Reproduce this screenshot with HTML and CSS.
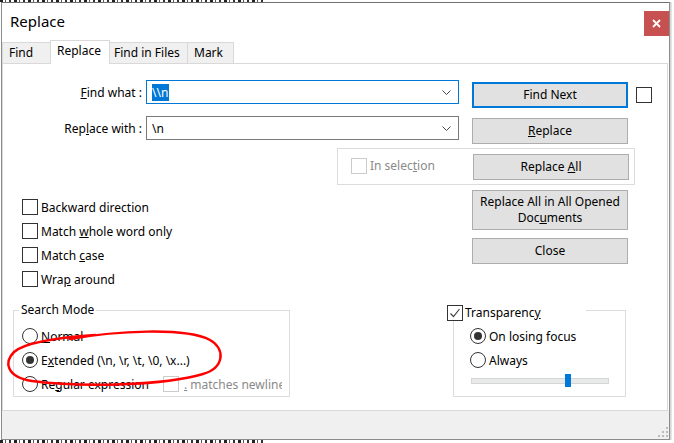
FILE: index.html
```html
<!DOCTYPE html>
<html>
<head>
<meta charset="utf-8">
<title>Replace</title>
<link rel="stylesheet" href="styles.css">
</head>
<body>
<div class="bgtop"></div>
<div class="screen">
  <div class="dialog">
    <div class="titlebar">
      <span class="title">Replace</span>
      <span class="close"><svg width="9" height="9" viewBox="0 0 9 9"><path d="M1 1L8 8M8 1L1 8" stroke="#fff" stroke-width="1.8" fill="none"/></svg></span>
    </div>
    <div class="tabs">
      <div class="tab t1">Find</div>
      <div class="tab t2 active">Replace</div>
      <div class="tab t3">Find in Files</div>
      <div class="tab t4">Mark</div>
    </div>
    <div class="panel">
      <div class="row r1">
        <div class="lbl"><u>F</u>ind what :</div>
        <div class="combo focus"><span class="sel">\\n</span><svg class="chev" width="9" height="5" viewBox="0 0 9 5"><path d="M0.5 0.5L4.5 4.5L8.5 0.5" stroke="#444" fill="none"/></svg></div>
        <div class="btn def"><span>Find Next</span></div>
        <span class="chk side"></span>
      </div>
      <div class="row r2">
        <div class="lbl">Rep<u>l</u>ace with :</div>
        <div class="combo"><span class="val">\n</span><svg class="chev" width="9" height="5" viewBox="0 0 9 5"><path d="M0.5 0.5L4.5 4.5L8.5 0.5" stroke="#444" fill="none"/></svg></div>
        <div class="btn rbtn"><span><u>R</u>eplace</span></div>
      </div>
      <div class="selframe">
        <span class="chk dis"></span><span class="distext">In selec<u>t</u>ion</span>
        <div class="btn rall"><span>Replace <u>A</u>ll</span></div>
      </div>
      <div class="mid">
        <div class="opts">
          <div class="opt"><span class="chk"></span><span>Backward direction</span></div>
          <div class="opt"><span class="chk"></span><span>Match <u>w</u>hole word only</span></div>
          <div class="opt"><span class="chk"></span><span>Match <u>c</u>ase</span></div>
          <div class="opt"><span class="chk"></span><span>Wra<u>p</u> around</span></div>
        </div>
        <div class="btncol">
          <div class="btn tall"><span>Replace All in All Opened<br>Doc<u>u</u>ments</span></div>
          <div class="btn"><span>Close</span></div>
        </div>
      </div>
      <div class="bottom">
        <fieldset class="mode">
          <legend>Search Mode</legend>
          <div class="opt"><span class="rad"></span><span><u>N</u>ormal</span></div>
          <div class="opt"><span class="rad on"></span><span>E<u>x</u>tended (\n, \r, \t, \0, \x...)</span></div>
          <div class="opt"><span class="rad"></span><span>Re<u>g</u>ular expression</span>
            <span class="nl"><span class="chk dis"></span><span class="distext"><u>.</u> matches newline</span></span>
          </div>
        </fieldset>
        <fieldset class="trans">
          <legend><span class="chk checked"><svg width="14" height="14" viewBox="0 0 14 14"><path d="M2.5 7.5L5.5 10.5L11.5 3" stroke="#444" stroke-width="1.2" fill="none"/></svg></span><span class="ttext">Transparenc<u>y</u></span></legend>
          <div class="opt"><span class="rad on"></span><span>On losing focus</span></div>
          <div class="opt"><span class="rad"></span><span>Always</span></div>
          <div class="slider"><div class="track"></div><div class="thumb" style="margin-left:94px"></div></div>
        </fieldset>
      </div>
    </div>
    <div class="footer">
      <svg class="grip" width="10" height="10" viewBox="0 0 10 10" fill="#bcbcbc"><rect x="8" y="0" width="2" height="2"/><rect x="4" y="4" width="2" height="2"/><rect x="8" y="4" width="2" height="2"/><rect x="0" y="8" width="2" height="2"/><rect x="4" y="8" width="2" height="2"/><rect x="8" y="8" width="2" height="2"/></svg>
    </div>
  </div>
  <div class="shadow"></div>
</div>
<div class="bgbot"></div>
<svg class="annot" width="674" height="443" viewBox="0 0 674 443"><path d="M70 339 C115 331 185 327 210 340 C226 349 224 368 203 374 C165 385 85 388 32 381 C6 377 4 362 14 352 C24 343 52 338 95 335" stroke="#f00" stroke-width="2.5" fill="none" stroke-linecap="round"/></svg>
</body>
</html>
```
FILE: styles.css
```css
* { box-sizing: border-box; }
html, body { margin: 0; padding: 0; }
body {
  width: 674px; height: 443px; overflow: hidden; position: relative;
  background: #fff;
  font-family: "Noto Sans", "Open Sans", sans-serif;
  font-size: 12px; color: #000;
}
.bgtop, .bgbot {
  height: 2px; width: 263px;
  background: repeating-linear-gradient(90deg, #222 0 3px, transparent 3px 5px, #555 5px 6px, transparent 6px 9px, #333 9px 11px, transparent 11px 14px);
}
.bgbot { height: 3px; }
.screen { display: flex; height: 438px; }
.dialog {
  margin-left: 1px; width: 669px; height: 438px;
  border: 1px solid #8c8c8c; border-top-color: #707070;
  background: #fff; display: flex; flex-direction: column;
}
.shadow { width: 2px; background: linear-gradient(90deg, #cfcfcf, #ececec); }

.titlebar { height: 37px; display: flex; }
.title { padding-left: 8px; line-height: 37px; font-size: 15px; }
.close {
  margin-left: auto; margin-top: 8px; width: 25px; height: 25px;
  background: #c75050; display: flex; align-items: center; justify-content: center;
}

.tabs { height: 23px; display: flex; align-items: flex-end; position: relative; z-index: 1; }
.tab {
  height: 21px; border: 1px solid #d9d9d9; border-bottom: none; background: #f0f0f0;
  margin-left: -1px; padding-left: 6px; line-height: 20px;
}
.t1 { margin-left: 0; width: 49px; }
.t2 { width: 60px; }
.t3 { width: 79px; padding-left: 4px; }
.t4 { width: 47px; }
.tab.active { height: 24px; margin-bottom: -1px; background: #fff; line-height: 19px; }

.panel { height: 348px; width: 666px; border: 1px solid #d9d9d9; background: #fff; }

.row { display: flex; align-items: flex-start; }
.r1 { margin-top: 16px; height: 27px; }
.r2 { margin-top: 9px; height: 27px; }
.lbl { width: 139px; text-align: right; line-height: 24px; padding-top: 1px; }
.combo {
  margin-left: 4px; width: 313px; height: 24px; border: 1px solid #7a7a7a;
  display: flex; align-items: center; padding-left: 5px; padding-right: 7px;
}
.combo.focus { border-color: #0078d7; }
.sel { background: #0078d7; color: #fff; line-height: 17px; padding-right: 1px; }
.chev { margin-left: auto; }
.btn {
  width: 156px; height: 26px; background: #e1e1e1; border: 1px solid #adadad;
  display: flex; align-items: center; justify-content: center; text-align: center; line-height: 16px;
  flex: none;
}
.btn.def { border: 2px solid #0078d7; margin-left: 13px; margin-top: 2px; }
.rbtn { margin-left: 13px; margin-top: 2px; }
.chk { width: 16px; height: 16px; border: 1px solid #333; background: #fff; flex: none; display: inline-block; }
.chk.side { margin-left: 8px; margin-top: 7px; }
.chk.dis { border-color: #cccccc; }
.distext { color: #8a8a8a; }

.rad {
  width: 16px; height: 16px; border: 1px solid #333; border-radius: 50%; background: #fff;
  flex: none; display: flex; align-items: center; justify-content: center;
}
.rad.on::after { content: ""; width: 8px; height: 8px; border-radius: 50%; background: #333; }

.selframe {
  margin-top: 5px; margin-left: 334px; width: 298px; height: 37px;
  border: 1px solid #dcdcdc; display: flex; align-items: flex-start;
}
.selframe .chk { margin-left: 13px; margin-top: 9px; }
.selframe .distext { margin-left: 3px; margin-top: 9px; line-height: 16px; }
.rall { margin-left: auto; margin-right: 5px; margin-top: 5px; }

.mid { display: flex; padding-left: 19px; height: 106px; }
.opts { width: 450px; padding-top: 10px; }
.opt { height: 24px; display: flex; align-items: center; white-space: nowrap; }
.opt > span:nth-child(2) { margin-left: 3px; }
.btncol { padding-top: 5px; display: flex; flex-direction: column; gap: 8px; }
.btn.tall { height: 40px; }

.bottom { display: flex; align-items: flex-start; margin-top: 9px; }
fieldset { margin: 0; padding: 0; min-width: 0; border: 1px solid #dcdcdc; }
legend { padding: 0 2px; line-height: 16px; }
.mode { margin-left: 10px; margin-top: 2px; width: 277px; height: 95px; padding: 6px 0 0 8px; overflow: hidden; }
.mode legend { margin-left: -3px; }
.nl { display: flex; align-items: center; margin-left: 14px; width: 119px; overflow: hidden; }
.nl .distext { margin-left: 5px; }
.trans { margin-left: 163px; width: 173px; height: 97px; padding: 4px 0 0 16px; }
.trans legend { margin-left: -23px; width: 139px; height: 20px; padding: 5px 0 0 0; display: flex; align-items: center; }
.chk.checked { display: flex; align-items: center; justify-content: center; }
.ttext { margin-left: 2px; }
.slider { margin-left: 1px; margin-top: 2px; width: 138px; height: 13px; position: relative; display: flex; align-items: center; }
.track { position: absolute; left: 0; right: 0; top: 4px; height: 6px; background: #e7eae8; border: 1px solid #d6d6d6; }
.thumb { position: relative; width: 6px; height: 13px; background: #0078d7; }

.footer { flex: 1; background: #f0f0f0; display: flex; justify-content: flex-end; align-items: flex-end; padding: 0 1px 2px 0; }
.annot { position: absolute; left: 0; top: 0; pointer-events: none; }
```
